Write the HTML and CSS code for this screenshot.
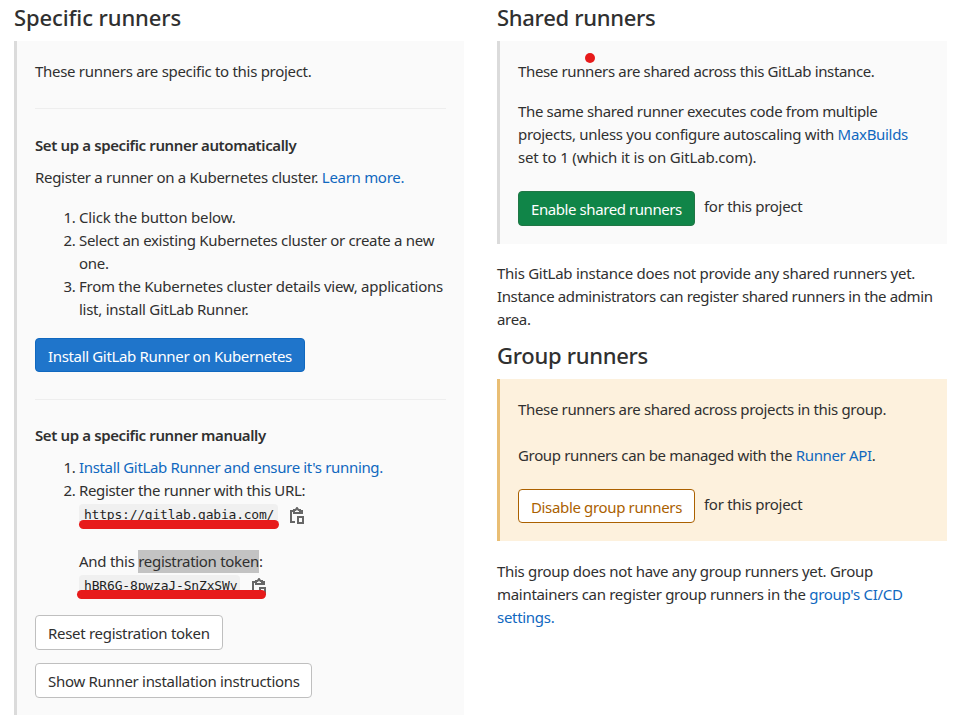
FILE: index.html
```html
<!DOCTYPE html>
<html lang="en">
<head>
<meta charset="utf-8">
<title>Runners</title>
<link rel="stylesheet" href="styles.css">
</head>
<body>
<main class="columns">
<section class="column">
<h4 class="title t-specific">Specific runners</h4>
<div class="panel panel-tall">
<p class="first">These runners are specific to this project.</p>
<hr>
<h5>Set up a specific runner automatically</h5>
<p class="register">Register a runner on a Kubernetes cluster. <a>Learn more.</a></p>
<ol class="steps">
<li><span class="loose">Click the button below.</span></li>
<li>Select an existing Kubernetes cluster or create a new<br>one.</li>
<li><span class="wide">From the Kubernetes cluster details view, applications<br>list, install GitLab Runner.</span></li>
</ol>
<button class="btn blue"><span class="snug">Install GitLab Runner on Kubernetes</span></button>
<hr class="second">
<h5>Set up a specific runner manually</h5>
<ol class="manual">
<li><a class="snug">Install GitLab Runner and ensure it's running.</a></li>
<li><span class="snug">Register the runner with this URL:</span>
<div class="code-row url-row"><code>https://gitlab.gabia.com/</code><svg class="clip" viewBox="0 0 16 18"><path d="M5 4H2v11h4M5 6V3h1.5L8 1l1.5 2H11v3zM11 4h2v3" fill="none" stroke="#666" stroke-width="2"/><path d="M9 10h5v6H9z" fill="none" stroke="#666" stroke-width="2"/></svg><i class="mark"></i></div>
<div class="token-label"><span class="wide">And this </span><mark>registration token</mark>:</div>
<div class="code-row token-row"><code>hBR6G-8pwzaJ-SnZxSWv</code><svg class="clip" viewBox="0 0 16 18"><path d="M5 4H2v11h4M5 6V3h1.5L8 1l1.5 2H11v3zM11 4h2v3" fill="none" stroke="#666" stroke-width="2"/><path d="M9 10h5v6H9z" fill="none" stroke="#666" stroke-width="2"/></svg><i class="mark"></i></div>
</li>
</ol>
<button class="btn reset">Reset registration token</button>
<button class="btn show">Show Runner installation instructions</button>
</div>
</section>
<section class="column">
<h4 class="title">Shared runners</h4>
<div class="panel shared">
<i class="dot"></i>
<p class="first tight">These runners are shared across this GitLab instance.</p>
<p class="detail"><span class="snug">The same shared runner executes code from multiple</span><br>projects, unless you configure autoscaling with <a>MaxBuilds</a><br><span class="loose">set to 1 (which it is on GitLab.com).</span></p>
<div class="action"><button class="btn green">Enable shared runners</button><span>for this project</span></div>
</div>
<p class="note"><span class="wide">This GitLab instance does not provide any shared runners yet.</span><br><span class="tighter">Instance administrators can register shared runners in the admin</span><br>area.</p>
<h4 class="title t-group">Group runners</h4>
<div class="panel group">
<p class="first snug">These runners are shared across projects in this group.</p>
<p class="manage snug">Group runners can be managed with the <a>Runner API</a>.</p>
<div class="action"><button class="btn orange">Disable group runners</button><span>for this project</span></div>
</div>
<p class="note group-note">This group does not have any group runners yet. Group<br>maintainers can register group runners in the <a>group's CI/CD</a><br><a>settings.</a></p>
</section>
</main>
</body>
</html>
```
FILE: styles.css
```css
* { box-sizing: border-box; }
body { margin: 0; height: 715px; overflow: hidden; background: #fff; color: #303030; font: 15px/23px "Noto Sans", sans-serif; white-space: nowrap; letter-spacing: -0.3px; }
.columns { display: grid; grid-template-columns: 450px 450px; column-gap: 33px; padding-left: 14px; height: 715px; }
.column { min-width: 0; }
p, h4, h5, ol { margin: 0; }
a { color: #1068bf; }
.loose { letter-spacing: -0.17px; }
.wide { letter-spacing: -0.27px; }
.snug { letter-spacing: -0.34px; }
.tight { letter-spacing: -0.36px; }
.tighter { letter-spacing: -0.38px; }
.title { height: 41px; padding-top: 2px; font-size: 22px; line-height: 30px; font-weight: 500; }
.t-specific { letter-spacing: -0.1px; }
.panel { position: relative; padding: 19px 18px 0; border-left: 3px solid #dbdbdb; background: #fafafa; }
.panel-tall { height: 674px; }
hr { height: 1px; margin: 25px 0; border: 0; background: #eee; }
h5 { font-size: 15px; line-height: 23px; font-weight: 600; letter-spacing: -0.38px; }
.register { margin-top: 9px; }
ol { padding-left: 44px; }
.steps { margin: 17px 0; }
.btn { display: block; height: 35px; padding: 2px 12px 0; border: 1px solid #bfbfbf; border-radius: 4px; background: #fff; color: #303030; font: inherit; letter-spacing: inherit; text-align: left; }
.blue { width: 270px; height: 34px; background: #1f75cb; border-color: #1068bf; color: #fff; }
hr.second { margin: 27px 0 24px; }
.manual { margin-top: 9px; }
.code-row { position: relative; display: flex; align-items: flex-start; height: 25px; }
code { height: 24px; padding: 0 5px; border-radius: 4px; background: #f0f0f0; font: 13px/21px "DejaVu Sans Mono", monospace; letter-spacing: -0.22px; color: #1f1f1f; }
.url-row { height: 46px; margin-top: 2px; }
.url-row code { width: 199px; }
.clip { width: 16px; height: 18px; margin: 3px 0 0 11px; }
mark { display: inline-block; height: 23px; background: #c3c3c3; color: inherit; }
.token-row { height: 40px; margin-top: 2px; }
.token-row code { width: 161px; letter-spacing: -0.16px; }
.mark { position: absolute; left: 0; top: 16px; width: 200px; height: 9px; border-radius: 5px; background: #e71b1b; }
.token-row .mark { left: -2px; top: 15px; width: 189px; }
.reset { width: 188px; }
.show { width: 277px; margin-top: 13px; }
.dot { position: absolute; left: 85px; top: 12px; width: 10px; height: 10px; border-radius: 50%; background: #e71b1b; }
.shared { height: 203px; }
.detail { margin-top: 17px; }
.action { display: flex; margin-top: 22px; }
.action > span { margin: 4px 0 0 9px; }
.green { width: 177px; background: #108548; border-color: #217645; color: #fff; letter-spacing: -0.42px; }
.note { margin-top: 18px; }
.group-note { margin-top: 19px; }
.t-group { height: 48px; padding-top: 9px; }
.group { height: 162px; background: #fdf1dd; border-color: #e9be74; }
.manage { margin-top: 23px; }
.orange { width: 177px; height: 34px; border-color: #ab6100; color: #ab6100; letter-spacing: -0.35px; }
```
